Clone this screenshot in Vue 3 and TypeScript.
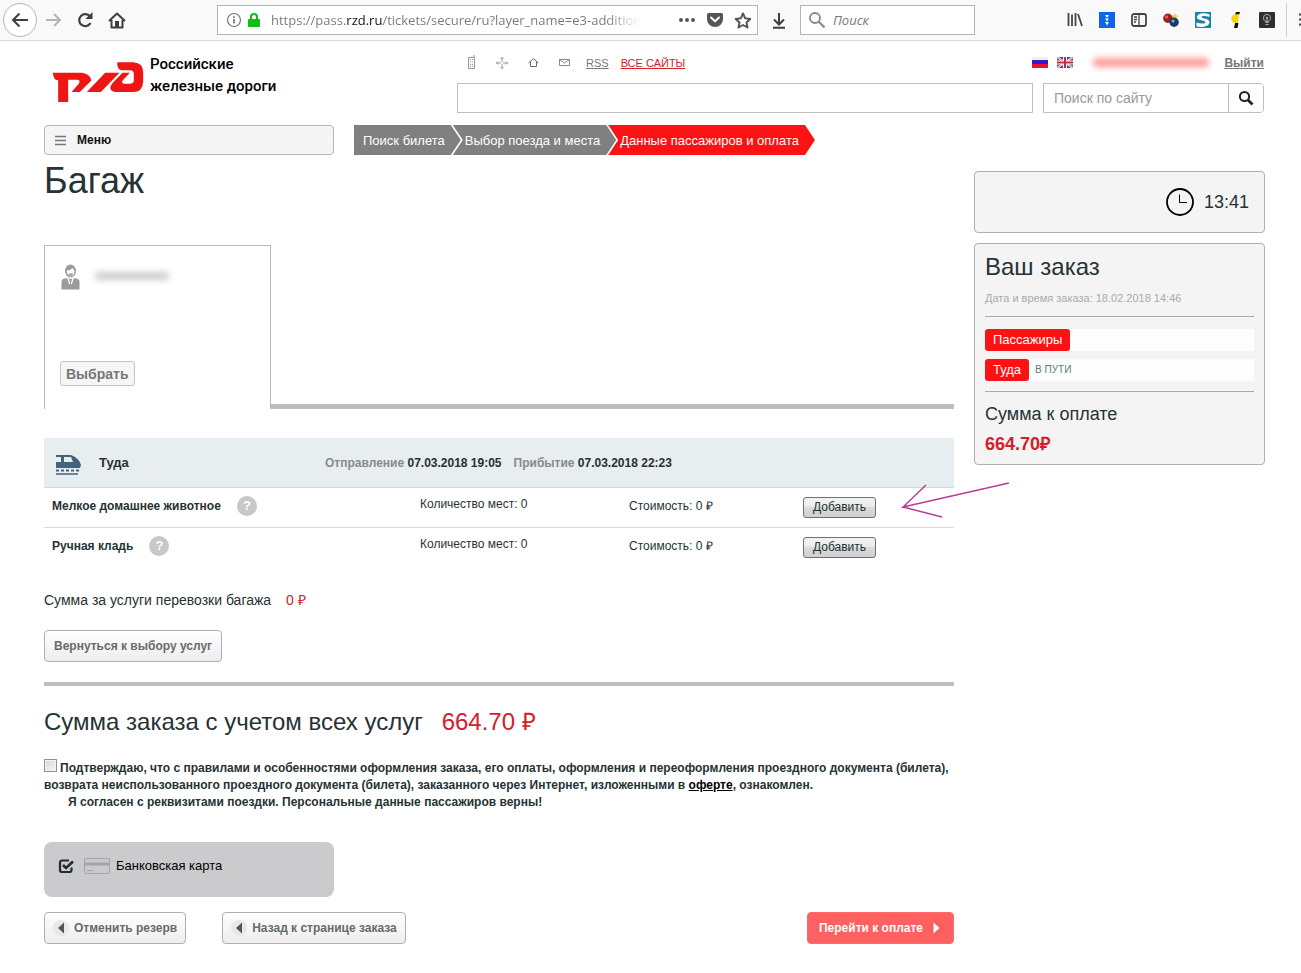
<script setup lang="ts">
import { ref } from 'vue'

interface Service {
  id: string
  name: string
  count: number
  cost: number
}

const services: Service[] = [
  { id: 'pet', name: 'Мелкое домашнее животное', count: 0, cost: 0 },
  { id: 'hand', name: 'Ручная кладь', count: 0, cost: 0 },
]

const steps: string[] = ['Поиск билета', 'Выбор поезда и места', 'Данные пассажиров и оплата']

const address = ref('https://pass.rzd.ru/tickets/secure/ru?layer_name=e3-additional')
const webQuery = ref('')
const headerQuery = ref('')
const siteQuery = ref('')
const agreed = ref(false)
const payByCard = ref(true)
</script>

<template>
  <div class="window">
    <div class="toolbar">
      <button class="tool back" aria-label="Назад">
        <svg width="18" height="16" viewBox="0 0 18 16"><path d="M17 8H2M8.500 1.500 2 8l6.500 6.500" fill="none" stroke="#3e3e40" stroke-width="2" /></svg>
      </button>
      <button class="tool forward" aria-label="Вперёд">
        <svg width="16" height="14" viewBox="0 0 16 14"><path d="M0 7h14M8 1l6 6-6 6" fill="none" stroke="#b4b4b4" stroke-width="2" /></svg>
      </button>
      <button class="tool reload" aria-label="Обновить">
        <svg width="16" height="16" viewBox="0 0 16 16"><path d="M13 4.500A6 6 0 1 0 13.500 11" fill="none" stroke="#3e3e40" stroke-width="2.200" /><path d="M15.500 0v7h-7z" fill="#3e3e40" /></svg>
      </button>
      <button class="tool" aria-label="Домой">
        <svg width="18" height="17" viewBox="0 0 18 17"><path d="M1 9 9 1.500 17 9M3.500 8v7.500h11V8" fill="none" stroke="#3e3e40" stroke-width="2" stroke-linejoin="round" /><path d="M7 15.500V9h4v6.500z" fill="#3e3e40" /></svg>
      </button>
      <div class="address">
        <svg width="16" height="16" viewBox="0 0 16 16"><circle cx="8" cy="8" r="6.500" fill="none" stroke="#777" stroke-width="1.200" /><path d="M8 7v4.500M8 4.300v1.600" stroke="#666" stroke-width="1.500" /></svg>
        <svg width="14" height="16" viewBox="0 0 14 16"><rect x="1" y="7" width="12" height="8" rx="1" fill="#12bc1a" /><path d="M4 8V5a3 3 0 0 1 6 0v3" fill="none" stroke="#12bc1a" stroke-width="2.200" /></svg>
        <input v-model="address" class="address-input" aria-label="Адрес страницы" />
        <button class="tool" aria-label="Действия">
          <svg width="18" height="16" viewBox="0 0 18 16"><g fill="#555"><circle cx="3" cy="8" r="2" /><circle cx="9" cy="8" r="2" /><circle cx="15" cy="8" r="2" /></g></svg>
        </button>
        <button class="tool" aria-label="Сохранить в Pocket">
          <svg width="18" height="16" viewBox="0 0 18 16"><path d="M2.500 1h13A1.500 1.500 0 0 1 17 2.500V7A8 8 0 0 1 1 7V2.500A1.500 1.500 0 0 1 2.500 1z" fill="#555" /><path d="M5 5.500 9 9.300l4-3.800" fill="none" stroke="#fff" stroke-width="2" stroke-linecap="round" stroke-linejoin="round" /></svg>
        </button>
        <button class="tool" aria-label="Добавить в закладки">
          <svg width="18" height="17" viewBox="0 0 18 17"><path d="m9 1.500 2.200 4.800 5.100.6-3.800 3.500 1 5.100L9 13l-4.500 2.500 1-5.100L1.700 6.900l5.100-.6z" fill="none" stroke="#555" stroke-width="2" stroke-linejoin="round" /></svg>
        </button>
      </div>
      <button class="tool download" aria-label="Загрузки">
        <svg width="14" height="17" viewBox="0 0 14 17"><path d="M7 1v11M2 7.500l5 5 5-5M1 15.700h12" fill="none" stroke="#3e3e40" stroke-width="2" /></svg>
      </button>
      <div class="web-search">
        <svg width="18" height="18" viewBox="0 0 18 18"><circle cx="7" cy="7" r="5" fill="none" stroke="#888" stroke-width="1.800" /><path d="m10.800 10.800 5.700 5.700" stroke="#888" stroke-width="2.200" /></svg>
        <input v-model="webQuery" placeholder="Поиск" aria-label="Поиск в интернете" />
      </div>
      <div class="addons">
        <button class="tool" aria-label="Библиотека">
          <svg width="16" height="16" viewBox="0 0 16 16"><path d="M1.500 1v13M5 2.500V14M8.500 1v13M11 2l4 12" fill="none" stroke="#444" stroke-width="1.800" /></svg>
        </button>
        <button class="tool" aria-label="Загрузчик">
          <svg width="16" height="16" viewBox="0 0 16 16"><path d="M0 0h16v16H0z" fill="#0c66ea" /><path d="M6 3h4L8 6zM6 6.500h4L8 9.500zM6 10h4L8 13.500z" fill="#fff" /></svg>
        </button>
        <button class="tool" aria-label="Боковая панель">
          <svg width="16" height="16" viewBox="0 0 16 16"><rect x="1" y="2" width="14" height="12" rx="2" fill="none" stroke="#444" stroke-width="1.800" /><path d="M8 2v12M3 5h3M3 7.500h3M3 10h2" stroke="#444" stroke-width="1.300" /></svg>
        </button>
        <button class="tool" aria-label="Шары">
          <svg width="16" height="16" viewBox="0 0 18 17"><path d="m13.500 0 1.200 3 3 .8-2.600 2-3.600 1-2-3.300 3-.6z" fill="#f5d442" /><circle cx="5.500" cy="6.500" r="5.300" fill="#9c2118" /><circle cx="4" cy="5" r="1.800" fill="#df6655" /><circle cx="12.500" cy="11" r="5.300" fill="#173d6c" /><circle cx="11.300" cy="9.500" r="1.700" fill="#78a9d4" /></svg>
        </button>
        <button class="tool" aria-label="Стильный поиск">
          <svg width="16" height="16" viewBox="0 0 16 16"><path d="M0 0h16v16H0z" fill="#1b83a5" /><path d="M14.500 2.500C9 0 2 1.500 2 5.300 2 9 10.500 8 10.500 10.200c0 1.700-4.500 1.600-9 .3v4c6 1.200 13-.2 13-4.300 0-4-8-3.400-8-5.300 0-1.300 4-1.100 8 .2z" fill="#fff" /></svg>
        </button>
        <button class="tool" aria-label="Переводчик">
          <svg width="16" height="16" viewBox="0 0 16 16"><path d="M9 0h4l-1 3H8z" fill="#111" /><path d="M5 4q2-2 7-2l-1 9H7q-4-2-2-7z" fill="#f8d307" /><path d="M8 11h3.500l-1 5H7z" fill="#111" /></svg>
        </button>
        <button class="tool" aria-label="Лампа">
          <svg width="16" height="16" viewBox="0 0 16 16"><rect width="16" height="16" rx="1" fill="#2e2e2e" /><circle cx="8" cy="6" r="3.600" fill="none" stroke="#aaa" /><path d="M8 5v5M6.500 10.500h3M6.500 12.500h3" stroke="#aaa" /><circle cx="8" cy="6" r="1.200" fill="#aaa" /></svg>
        </button>
      </div>
      <button class="tool menu-dots" aria-label="Меню браузера">
        <svg width="4" height="16" viewBox="0 0 4 16"><path d="M2 2.500h2M2 7.500h2M2 12.500h2" stroke="#444" stroke-width="2" /></svg>
      </button>
    </div>

    <div class="page">
      <header class="header">
        <a class="brand" href="#">
          <svg class="logo" width="93" height="42" viewBox="157 182 276 126">
            <g fill="#f01414">
              <path d="M158 217H245q27 4 28 24L239 275H214L236 250q6-12-5-12H204V305H174V240Q160 240 158 217z" />
              <path d="M260 275 315 217H358L302 275z" />
              <path d="M352 186H400Q429 188 429 216V245Q427 275 399 275H345Q320 268 338 247L367 217H389L368 240Q362 250 372 250H391Q401 250 401 240V222Q401 210 390 210H365Q351 209 351 188z" />
            </g>
          </svg>
          <span class="brand-name">Российские<br />железные дороги</span>
        </a>
        <div class="header-main">
          <nav class="links">
            <a href="#" aria-label="Мобильная версия"><svg width="9" height="15" viewBox="0 0 9 15"><path d="M1.500 2.500h6v11h-6zM7 0v3" fill="none" stroke="#8b98a0" /><path d="M3 4.500h3M3 7h3M3 9.500h3M3 11.500h3" stroke="#8b98a0" stroke-dasharray="1 1" /></svg></a>
            <a href="#" aria-label="Карта сайта"><svg width="12" height="12" viewBox="0 0 12 12"><path d="M6 0v5M6 7v5M0 6h5M7 6h5M4.500 2 6 .5 7.500 2M4.500 10 6 11.500 7.500 10M2 4.500.5 6 2 7.500M10 4.500 11.500 6 10 7.500" fill="none" stroke="#999" /></svg></a>
            <a href="#" aria-label="Главная"><svg width="11" height="11" viewBox="0 0 11 11"><path d="m.5 6 5-4.500 5 4.500M2.500 5v4.500h6V5" fill="none" stroke="#666" /></svg></a>
            <a href="#" aria-label="Почта"><svg width="11" height="9" viewBox="0 0 11 9"><path d="M.5 1.500h10v6H.5zM.5 1.500l5 3.500 5-3.500" fill="none" stroke="#888" /></svg></a>
            <a href="#" class="rss">RSS</a>
            <a href="#" class="all-sites">ВСЕ САЙТЫ</a>
            <span class="spacer"></span>
            <a href="#" aria-label="Русский"><svg width="16" height="11" viewBox="0 0 16 11"><path d="M0 0h16v4H0z" fill="#f0f0f6" /><path d="M0 3h16v5H0z" fill="#2d1fc4" /><path d="M0 7h16v4H0z" fill="#e5142e" /></svg></a>
            <a href="#" class="flag-en" aria-label="English"><svg width="16" height="11" viewBox="0 0 16 11"><path d="M0 0h16v11H0z" fill="#32408f" /><path d="m0 0 16 11M16 0 0 11" stroke="#fff" stroke-width="2.200" /><path d="m0 0 16 11M16 0 0 11" stroke="#d33" stroke-width=".7" /><path d="M8 0v11M0 5.500h16" stroke="#fff" stroke-width="4" /><path d="M8 0v11M0 5.500h16" stroke="#d4213d" stroke-width="2" /></svg></a>
            <a href="#" class="account" aria-label="Личный кабинет"></a>
            <a href="#" class="logout">Выйти</a>
          </nav>
          <div class="searches">
            <input v-model="headerQuery" class="wide-search" aria-label="Строка поиска" />
            <form class="site-search" @submit.prevent>
              <input v-model="siteQuery" placeholder="Поиск по сайту" aria-label="Поиск по сайту" />
              <button aria-label="Найти">
                <svg width="16" height="16" viewBox="0 0 16 16"><circle cx="6.500" cy="6.500" r="4.600" fill="none" stroke="#222" stroke-width="2" /><path d="m10 10 4.500 4.500" stroke="#222" stroke-width="2.600" /></svg>
              </button>
            </form>
          </div>
        </div>
      </header>

      <div class="nav-row">
        <button class="menu">
          <svg width="11" height="11" viewBox="0 0 11 11"><path d="M0 1.500h11M0 5.500h11M0 9.500h11" stroke="#777" stroke-width="1.600" /></svg>
          Меню
        </button>
        <ol class="steps">
          <li v-for="(step, i) in steps" :key="step" :class="{ current: i === steps.length - 1 }">{{ step }}</li>
        </ol>
      </div>

      <div class="columns">
        <main class="main">
          <h1>Багаж</h1>
          <div class="tabs">
            <section class="passenger">
              <div class="person">
                <svg width="20" height="26" viewBox="0 0 20 26"><ellipse cx="10.500" cy="7" rx="5.500" ry="6.500" fill="#9b9b9b" /><path d="M6.500 6.500q4 0 6-2.500l2 3q0 4-3.500 5.500-4-1.500-4.500-6z" fill="#fff" /><path d="M8 9.500h5.500l-2.500 3z" fill="#9b9b9b" /><path d="M1.500 25.500V18q0-3 3-3.500l3-.5 3 1 3-1 3 .5q3 .5 3 3.500v7.500z" fill="#9b9b9b" /><path d="m7.800 14 1.900 6M13.200 14l-1.900 6" stroke="#fff" stroke-width="1.300" /></svg>
                <span class="hidden-name"></span>
              </div>
              <button class="choose">Выбрать</button>
            </section>
          </div>

          <section class="services">
            <div class="trip">
              <svg width="27" height="21" viewBox="0 0 27 21"><path d="M1 1h15q8 3 10 10l-1 3H1V8h5V3H1zM9 3v5h9l-2-5z" fill="#43637d" fill-rule="evenodd" /><path d="M1 16.500h24" stroke="#43637d" stroke-width="2" stroke-dasharray="3 2" /><path d="M1 20h22" stroke="#43637d" stroke-width="1.500" /></svg>
              <strong class="direction">Туда</strong>
              <span class="time">Отправление <b>07.03.2018 19:05</b></span>
              <span class="time">Прибытие <b>07.03.2018 22:23</b></span>
            </div>
            <table>
              <tbody>
                <tr v-for="service in services" :key="service.id">
                  <th scope="row">
                    <div class="service-name">
                      {{ service.name }}
                      <button class="help" aria-label="Справка">?</button>
                    </div>
                  </th>
                  <td class="count">Количество мест: {{ service.count }}</td>
                  <td class="cost">Стоимость: {{ service.cost }} ₽</td>
                  <td class="action"><button class="add">Добавить</button></td>
                </tr>
              </tbody>
            </table>
            <svg class="pointer" width="110" height="38" viewBox="0 0 110 38"><path d="M108 2 2 26 25 4M2 26l39 10" fill="none" stroke="#b83f96" stroke-width="1.500" /></svg>
          </section>

          <p class="baggage-sum">Сумма за услуги перевозки багажа <span>0 ₽</span></p>
          <button class="btn return">Вернуться к выбору услуг</button>

          <p class="order-sum">Сумма заказа с учетом всех услуг <span>664.70 ₽</span></p>

          <div class="agreement">
            <input id="agree" v-model="agreed" type="checkbox" /><label for="agree">Подтверждаю, что с правилами и особенностями оформления заказа, его оплаты, оформления и переоформления проездного документа (билета), возврата неиспользованного проездного документа (билета), заказанного через Интернет, изложенными в <a href="#">оферте</a>, ознакомлен.</label>
            <div class="consent">Я согласен с реквизитами поездки. Персональные данные пассажиров верны!</div>
          </div>

          <label class="payment">
            <input v-model="payByCard" type="checkbox" />
            <svg class="tick" width="16" height="16" viewBox="0 0 16 16"><path d="M11 2.500H4A2 2 0 0 0 2 4.500V12a2 2 0 0 0 2 2h7.500a2 2 0 0 0 2-2V9.500" fill="none" stroke="#222d2d" stroke-width="2.200" /><path v-if="payByCard" d="m5 7 3 3 7-6.500" fill="none" stroke="#222d2d" stroke-width="2.600" /></svg>
            <svg width="26" height="16" viewBox="0 0 26 16"><rect x=".5" y=".5" width="25" height="15" rx="1.500" fill="#cacacc" stroke="#a5a5a7" /><path d="M1 6h24" stroke="#a5a5a7" stroke-width="3" /><path d="M3 12.500h6" stroke="#a5a5a7" /></svg>
            Банковская карта
          </label>

          <div class="actions">
            <button class="btn">
              <svg width="16" height="16" viewBox="0 0 16 16"><circle cx="8" cy="8" r="8" fill="#e8e8ea" /><path d="M11 2.500v11L5 8z" fill="#555" /></svg>
              Отменить резерв
            </button>
            <button class="btn to-order">
              <svg width="16" height="16" viewBox="0 0 16 16"><circle cx="8" cy="8" r="8" fill="#e8e8ea" /><path d="M11 2.500v11L5 8z" fill="#555" /></svg>
              Назад к странице заказа
            </button>
            <button class="btn pay">
              Перейти к оплате
              <svg width="16" height="16" viewBox="0 0 16 16"><circle cx="8" cy="8" r="8" fill="#fb5c5c" /><path d="M5.500 2.500v11l6-5.500z" fill="#fff" /></svg>
            </button>
          </div>
        </main>

        <aside class="sidebar">
          <div class="panel timer">
            <svg width="28" height="28" viewBox="0 0 28 28"><circle cx="14" cy="14" r="13" fill="none" stroke="#000" stroke-width="1.800" /><path d="M13.500 6.500v8H21" fill="none" stroke="#000" /></svg>
            13:41
          </div>
          <div class="panel order">
            <h2>Ваш заказ</h2>
            <p class="date">Дата и время заказа: 18.02.2018 14:46</p>
            <div class="tags">
              <div class="tag-row"><a href="#">Пассажиры</a></div>
              <div class="tag-row"><a href="#">Туда</a><span>В ПУТИ</span></div>
            </div>
            <h3>Сумма к оплате</h3>
            <p class="total">664.70₽</p>
          </div>
        </aside>
      </div>
    </div>
  </div>
</template>

<style>
body {
  margin: 0;
  background: #fff;
}
</style>

<style scoped>
* {
  box-sizing: border-box;
}
.window {
  font: 12px/16px "Liberation Sans", Arial, sans-serif;
  color: #263234;
  overflow: hidden;
}
button,
input {
  font: inherit;
  color: inherit;
}
button {
  cursor: pointer;
  white-space: nowrap;
}
svg {
  display: block;
  flex: none;
}
h1,
h2,
h3,
p,
ol {
  margin: 0;
  padding: 0;
  font-weight: normal;
}

/* Browser toolbar */
.toolbar {
  display: flex;
  align-items: center;
  height: 41px;
  padding-left: 3px;
  background: #f9f9fa;
  border-bottom: 1px solid #d8d8d8;
  font-family: "Open Sans", "Noto Sans", sans-serif;
}
.tool {
  display: flex;
  padding: 0;
  border: 0;
  background: none;
}
.back {
  width: 34px;
  height: 34px;
  align-items: center;
  justify-content: center;
  background: #fff;
  border: 1px solid #b5b5b5;
  border-radius: 50%;
}
.forward {
  margin: 0 15px 0 9px;
}
.reload {
  margin-right: 15px;
}
.address {
  display: flex;
  align-items: center;
  gap: 10px;
  flex: 526 1 0;
  height: 30px;
  margin-left: 91px;
  padding: 0 5px 0 8px;
  background: #fff;
  border: 1px solid #b5b5b5;
}
.address svg + svg {
  margin-left: -5px;
}
.address-input {
  flex: 1;
  min-width: 0;
  margin-right: 28px;
  padding: 0;
  border: 0;
  outline: 0;
  font-size: 13px;
  background: linear-gradient(90deg, #777 75px, #111 75px, #111 112px, #777 112px, #777 335px, transparent 370px);
  background-clip: text;
  color: transparent;
}
.download {
  margin: 0 14px;
}
.web-search {
  display: flex;
  align-items: center;
  gap: 7px;
  flex: 159 1 0;
  height: 30px;
  padding: 0 7px;
  background: #fff;
  border: 1px solid #b5b5b5;
}
.web-search input {
  width: 100%;
  min-width: 0;
  padding: 0;
  border: 0;
  outline: 0;
  background: none;
  font-size: 13px;
}
.web-search input::placeholder {
  color: #777;
  font-style: italic;
  opacity: 1;
}
.addons {
  display: flex;
  gap: 16px;
  margin: 0 11px 0 92px;
}
.menu-dots {
  padding: 9px 0 9px 10px;
  border-left: 1px solid #d0d0d0;
}

/* Site header */
.page {
  padding: 12px 36px 30px 44px;
}
.header {
  display: flex;
}
.brand {
  display: flex;
  width: 413px;
  padding-left: 8px;
  gap: 5px;
  text-decoration: none;
}
.logo {
  margin-top: 8px;
}
.brand-name {
  font: 500 15px/22px Roboto, sans-serif;
  color: #000;
}
.header-main {
  flex: 1;
  padding-right: 1px;
}
.links {
  display: flex;
  align-items: center;
  height: 19px;
  margin-bottom: 11px;
  padding-left: 10px;
  gap: 20px;
  font-size: 11px;
}
.rss {
  margin-left: -4px;
  color: #777;
}
.all-sites {
  margin-left: -8px;
  color: #d3202c;
}
.spacer {
  flex: 1;
}
.flag-en {
  margin-left: -11px;
}
.account {
  width: 116px;
  height: 9px;
  border-radius: 4px;
  background: #f99;
  filter: blur(3px);
}
.logout {
  margin-left: -5px;
  color: #777;
  font-size: 12px;
  font-weight: bold;
}
.searches {
  display: flex;
  gap: 10px;
}
.wide-search {
  flex: 1;
  min-width: 0;
  height: 30px;
  padding: 0 10px;
  border: 1px solid #bfbfbf;
}
.site-search {
  display: flex;
  width: 221px;
  height: 30px;
  border: 1px solid #bfbfbf;
  border-radius: 0 4px 4px 0;
  overflow: hidden;
}
.site-search input {
  flex: 1;
  min-width: 0;
  padding: 0 10px;
  border: 0;
  font-size: 14px;
}
.site-search input::placeholder {
  color: #999;
  opacity: 1;
}
.site-search button {
  width: 35px;
  padding: 0 9px;
  border: 0;
  border-left: 1px solid #bfbfbf;
  background: #fff;
}

/* Menu and booking steps */
.nav-row {
  display: flex;
  gap: 20px;
  margin-top: 12px;
}
.menu {
  display: flex;
  align-items: center;
  gap: 11px;
  width: 290px;
  height: 30px;
  padding: 0 10px;
  background: #f5f5f6;
  border: 1px solid #b5b5b5;
  border-radius: 4px;
  font-weight: bold;
  color: #111;
}
.steps {
  display: flex;
  list-style: none;
}
.steps li {
  height: 30px;
  padding: 0 16px 0 12px;
  margin-left: -8px;
  background: #808080;
  color: #fff;
  font-size: 13px;
  line-height: 32px;
  white-space: nowrap;
  clip-path: polygon(0 0, calc(100% - 10px) 0, 100% 50%, calc(100% - 10px) 100%, 0 100%, 10px 50%);
}
.steps li:first-child {
  margin-left: 0;
  padding-left: 9px;
  clip-path: polygon(0 0, calc(100% - 10px) 0, 100% 50%, calc(100% - 10px) 100%, 0 100%);
}
.steps .current {
  background: #fc1212;
}

/* Two-column body */
.columns {
  display: flex;
  align-items: flex-start;
  gap: 20px;
}
.main {
  flex: 1;
  min-width: 0;
}
h1 {
  margin-top: 5px;
  font-size: 36px;
  line-height: 42px;
}
.tabs {
  display: flex;
  margin-top: 43px;
}
.tabs::after {
  content: "";
  flex: 1;
  align-self: flex-end;
  height: 5px;
  background: #bfbdbf;
}
.passenger {
  display: flex;
  flex-direction: column;
  justify-content: space-between;
  align-items: flex-start;
  width: 227px;
  height: 164px;
  padding: 18px 15px 23px;
  border: 1px solid #b9b9b9;
  border-bottom: 0;
}
.person {
  display: flex;
  gap: 15px;
}
.hidden-name {
  width: 74px;
  height: 8px;
  margin-top: 8px;
  border-radius: 4px;
  background: #ccc;
  filter: blur(3px);
}
.choose {
  height: 25px;
  padding: 0 5px;
  background: #f6f6f7;
  border: 1px solid #c4c4c4;
  border-radius: 3px;
  color: #777;
  font-size: 14px;
  font-weight: bold;
}
.services {
  position: relative;
  margin-top: 29px;
}
.trip {
  display: flex;
  align-items: center;
  height: 50px;
  padding-left: 11px;
  background: #e8edef;
  border-bottom: 1px solid #d3d8da;
}
.trip svg {
  margin-top: 4px;
}
.direction {
  width: 243px;
  padding-left: 17px;
  font-size: 13px;
}
.time {
  margin-right: 12px;
  color: #858b8d;
  font-weight: bold;
}
.time b {
  color: #263234;
}
table {
  width: 100%;
  border-spacing: 0;
  table-layout: fixed;
}
th,
td {
  height: 40px;
  padding: 0;
  text-align: left;
  vertical-align: top;
}
tr:not(:last-child) > * {
  border-bottom: 1px solid #d8dada;
}
th {
  width: 376px;
  padding-left: 8px;
}
.service-name {
  display: flex;
  align-items: center;
  gap: 16px;
  height: 36px;
}
.help {
  width: 20px;
  height: 20px;
  padding: 0;
  border: 0;
  border-radius: 50%;
  background: #c8c8c8;
  color: #fff;
  font-size: 13px;
}
.count {
  width: 209px;
  padding-top: 8px;
}
.cost {
  width: 174px;
  padding-top: 10px;
}
.action {
  padding-top: 9px;
}
.add {
  display: block;
  height: 21px;
  padding: 0 9px;
  background: linear-gradient(#f3f3f3, #eaeaea 50%, #dadadb 50%, #d0d0d2);
  border: 1px solid #707070;
  border-radius: 3px;
  line-height: 17px;
}
.pointer {
  position: absolute;
  top: 43px;
  right: -57px;
}
.baggage-sum {
  margin-top: 24px;
  font-size: 14px;
}
.baggage-sum span {
  margin-left: 11px;
  color: #d3202c;
}
.btn {
  display: flex;
  align-items: center;
  gap: 5px;
  height: 32px;
  padding: 0 9px;
  background: linear-gradient(#fefefe, #ededee);
  border: 1px solid #b0b0b0;
  border-radius: 4px;
  color: #666c6d;
  font-weight: bold;
}
.return {
  margin-top: 22px;
}
.order-sum {
  margin-top: 20px;
  padding-top: 21px;
  border-top: 4px solid #bfbdbf;
  font-size: 24px;
  line-height: 30px;
}
.order-sum span {
  margin-left: 12px;
  color: #d3202c;
}
.agreement {
  margin-top: 22px;
  line-height: 17px;
  font-weight: bold;
}
.agreement input {
  appearance: none;
  width: 13px;
  height: 13px;
  margin: 0 3px 0 0;
  background: linear-gradient(135deg, #d5d5d5, #f6f6f6);
  border: 1px solid #8e8f8f;
  box-shadow: inset 0 0 0 1px #f4f4f4;
}
.agreement input:checked {
  background: #43637d;
}
.agreement a {
  color: #000;
}
.consent {
  padding-left: 24px;
}
.payment {
  position: relative;
  display: flex;
  gap: 6px;
  width: 290px;
  height: 55px;
  margin-top: 31px;
  padding: 16px 14px;
  background: #cbcacc;
  border-radius: 8px;
  color: #000;
  font-size: 13px;
}
.payment input {
  position: absolute;
  width: 16px;
  height: 16px;
  margin: 0;
  opacity: 0;
}
.payment .tick {
  margin-right: 4px;
}
.actions {
  display: flex;
  margin-top: 15px;
}
.actions .btn {
  padding: 0 8px;
}
.actions .to-order {
  margin-left: 36px;
}
.actions .pay {
  margin-left: auto;
  padding: 0 9px 0 11px;
  background: #ff6060;
  border-color: #ff6b6b;
  color: #fff;
}

/* Order summary */
.sidebar {
  width: 291px;
  margin-top: 16px;
}
.panel {
  background: #f4f4f4;
  border: 1px solid #b0b0b0;
  border-radius: 4px;
}
.timer {
  display: flex;
  align-items: center;
  justify-content: flex-end;
  gap: 10px;
  height: 62px;
  padding-right: 15px;
  font-size: 18px;
}
.order {
  margin-top: 10px;
  padding: 8px 10px 9px;
}
h2 {
  font-size: 24px;
  line-height: 30px;
}
.date {
  margin-top: 8px;
  color: #aaa;
  font-size: 11px;
}
.tags {
  display: flex;
  flex-direction: column;
  gap: 8px;
  margin: 10px 0;
  padding: 12px 0 10px;
  border: solid #aaa;
  border-width: 1px 0;
}
.tag-row {
  display: flex;
  align-items: center;
  gap: 6px;
  background: #fdfdfd;
  color: #5c7c80;
  font-size: 10px;
}
.tag-row a {
  padding: 0 8px;
  background: #fc1212;
  border-radius: 3px;
  color: #fff;
  font-size: 13px;
  line-height: 22px;
  text-decoration: none;
}
h3 {
  font-size: 18px;
  line-height: 24px;
}
.total {
  margin-top: 7px;
  color: #d3202c;
  font-size: 18px;
  font-weight: bold;
  line-height: 22px;
}
</style>
